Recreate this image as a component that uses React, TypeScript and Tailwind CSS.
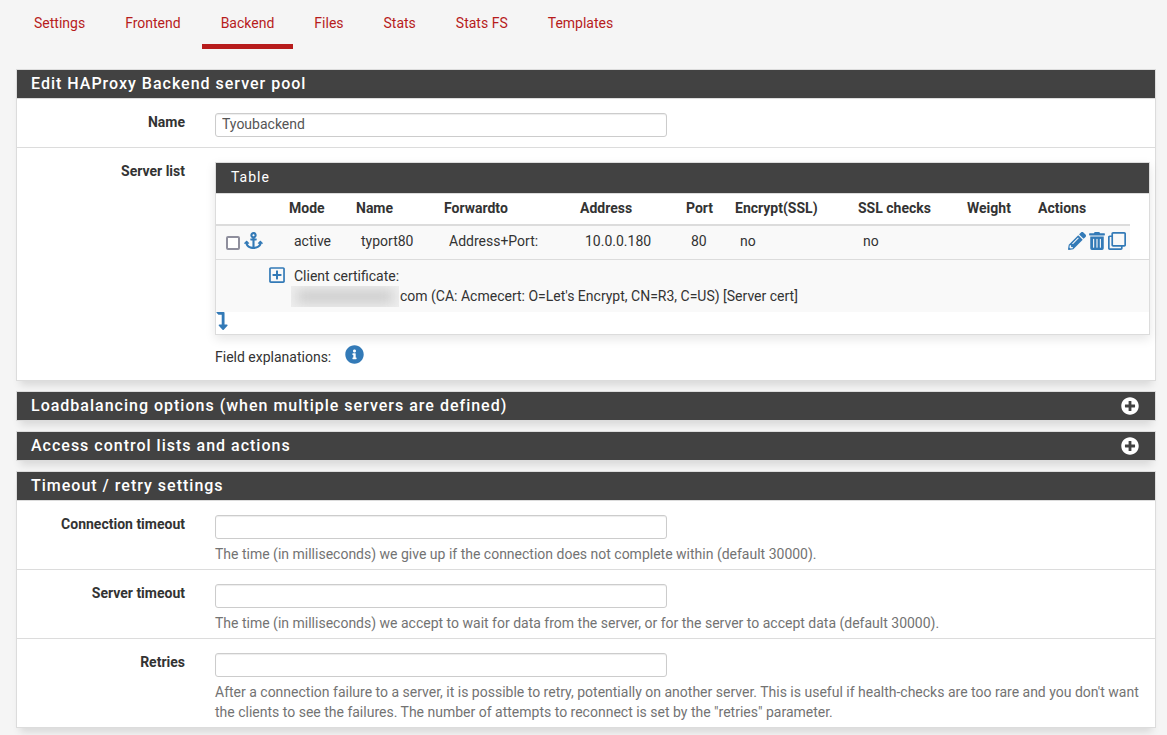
import React, { useState } from 'react';
import {
  FaAnchor,
  FaInfoCircle,
  FaLevelDownAlt,
  FaPencilAlt,
  FaPlusCircle,
  FaRegClone,
  FaRegPlusSquare,
  FaTrashAlt,
} from 'react-icons/fa';

const tabs = ['Settings', 'Frontend', 'Backend', 'Files', 'Stats', 'Stats FS', 'Templates'];

const columns = ['Mode', 'Name', 'Forwardto', 'Address', 'Port', 'Encrypt(SSL)', 'SSL checks', 'Weight', 'Actions'];

const servers = [
  ['active', 'typort80', 'Address+Port:', '10.0.0.180', '80', 'no', 'no', ''],
];

const timeouts = [
  {
    id: 'connection_timeout',
    label: 'Connection timeout',
    help: 'The time (in milliseconds) we give up if the connection does not complete within (default 30000).',
  },
  {
    id: 'server_timeout',
    label: 'Server timeout',
    help: 'The time (in milliseconds) we accept to wait for data from the server, or for the server to accept data (default 30000).',
  },
  {
    id: 'retries',
    label: 'Retries',
    help: 'After a connection failure to a server, it is possible to retry, potentially on another server. This is useful if health-checks are too rare and you don\'t want the clients to see the failures. The number of attempts to reconnect is set by the "retries" parameter.',
  },
];

const inputClass =
  'block w-full max-w-[452px] h-6 mb-[5px] px-1.5 pb-0.5 bg-white border border-[#cccccc] rounded-[3px] text-[#555555] shadow-[inset_0_1px_1px_rgba(0,0,0,0.075)]';

type PanelProps = {
  title: string;
  collapsed?: boolean;
  children?: React.ReactNode;
};

const Panel: React.FC<PanelProps> = ({ title, collapsed, children }) => (
  <section className="bg-white border border-[#dcdcdc] shadow-[0_8px_8px_-4px_rgba(0,0,0,0.12)]">
    <div className="flex items-center justify-between h-7 pl-[14px] pr-4 bg-[#424242] text-white">
      <h2 className="text-base leading-5 font-medium tracking-[1px]">{title}</h2>
      {collapsed && (
        <button type="button" aria-label={`Expand ${title}`} className="cursor-pointer">
          <FaPlusCircle className="size-[18px]" />
        </button>
      )}
    </div>
    {!collapsed && <div className="border-t border-[#dcdcdc] divide-y divide-[#dcdcdc]">{children}</div>}
  </section>
);

type RowProps = {
  label: string;
  htmlFor?: string;
  children: React.ReactNode;
};

const Row: React.FC<RowProps> = ({ label, htmlFor, children }) => (
  <div className="flex gap-[30px] pt-[14px] pb-[5px] pr-[5px]">
    <label htmlFor={htmlFor} className="w-[168px] shrink-0 -mt-px text-right font-bold">
      {label}
    </label>
    <div className="flex-1 min-w-0">{children}</div>
  </div>
);

const ServerTable: React.FC = () => (
  <div className="border border-[#dcdcdc] bg-white shadow-[0_4px_10px_rgba(0,0,0,0.1)]">
    <h3 className="h-[30px] px-[15px] py-1 bg-[#424242] text-white tracking-[1px]">Table</h3>
    <table className="w-full table-fixed border-separate border-spacing-0 border-t border-[#dcdcdc] text-left">
      <colgroup>
        <col className="w-[68px]" />
        <col className="w-[67px]" />
        <col className="w-[88px]" />
        <col className="w-[136px]" />
        <col className="w-[106px]" />
        <col className="w-[49px]" />
        <col className="w-[123px]" />
        <col className="w-[109px]" />
        <col className="w-[71px]" />
        <col className="w-[97px]" />
        <col />
      </colgroup>
      <thead>
        <tr>
          <td className="border-b-2 border-[#dcdcdc]" />
          {columns.map((name) => (
            <th key={name} className="px-[5px] pt-1 pb-1.5 border-b-2 border-[#dcdcdc] font-bold">
              {name}
            </th>
          ))}
          <td />
        </tr>
      </thead>
      <tbody>
        {servers.map((cells) => (
          <tr key={cells[1]} className="h-[33px]">
            <td className="pl-2.5 pb-1 bg-[#f9f9f9]">
              <div className="flex items-center gap-1">
                <input type="checkbox" aria-label="Select server" className="size-[14px] mt-1 appearance-none bg-white border-2 border-[#8f8f9d] rounded-[2px]" />
                <button type="button" aria-label="Move server" className="text-[#337ab7] cursor-pointer">
                  <FaAnchor className="size-[19px]" />
                </button>
              </div>
            </td>
            {cells.map((cell, i) => (
              <td key={i} className="px-2.5 pb-1 bg-[#f9f9f9] whitespace-nowrap">
                {cell}
              </td>
            ))}
            <td className="pr-1 pb-1 bg-[#f9f9f9]">
              <div className="flex items-center justify-end gap-0.5 text-[#337ab7]">
                <button type="button" aria-label="Edit server" className="cursor-pointer">
                  <FaPencilAlt className="size-[18px]" />
                </button>
                <button type="button" aria-label="Delete server" className="cursor-pointer">
                  <FaTrashAlt className="size-[18px]" />
                </button>
                <button type="button" aria-label="Duplicate server" className="cursor-pointer">
                  <FaRegClone className="size-[18px]" />
                </button>
              </div>
            </td>
            <td />
          </tr>
        ))}
        <tr>
          <td colSpan={11} className="py-[6px] pl-[52px] border-t border-[#dcdcdc] bg-[#f9f9f9]">
            <div className="flex gap-2">
              <button type="button" aria-label="Show details" className="self-start text-[#337ab7] cursor-pointer">
                <FaRegPlusSquare className="size-[18px]" />
              </button>
              <div>
                <div>Client certificate:</div>
                <div className="flex items-center h-5">
                  <span className="w-[108px] h-[21px] -ml-[3px] mr-px bg-[#eeeeee] overflow-hidden py-1 px-1.5">
                    <span className="block h-full bg-[#cccccc] blur-[6px]" />
                  </span>
                  com (CA: Acmecert: O=Let's Encrypt, CN=R3, C=US) [Server cert]
                </div>
              </div>
            </div>
          </td>
        </tr>
      </tbody>
    </table>
    <button type="button" aria-label="Add server" className="block h-[22px] pb-1 text-[#337ab7] cursor-pointer">
      <FaLevelDownAlt className="w-3 h-[18px]" />
    </button>
  </div>
);

const App: React.FC = () => {
  const [active, setActive] = useState('Backend');

  return (
    <div className="min-h-screen bg-[#f5f5f5] text-[#333333] text-sm leading-5 font-['Roboto',sans-serif]">
      <nav className="flex gap-0.5 pl-[15px]">
        {tabs.map((tab) => (
          <a
            key={tab}
            href="#"
            onClick={() => setActive(tab)}
            className={`h-[49px] px-[19px] pt-[13px] border-b-[5px] text-[#b71c1c] ${
              tab === active ? 'border-[#b71c1c]' : 'border-transparent'
            }`}
          >
            {tab}
          </a>
        ))}
      </nav>

      <main className="flex flex-col gap-2.5 mt-5 ml-4 mr-[11px] pb-2">
        <Panel title="Edit HAProxy Backend server pool">
          <Row label="Name" htmlFor="name">
            <input id="name" type="text" defaultValue="Tyoubackend" className={inputClass} />
          </Row>
          <Row label="Server list">
            <ServerTable />
            <div className="flex items-start gap-[14px] pt-2.5 pb-2">
              <span className="pt-0.5">Field explanations:</span>
              <button type="button" aria-label="Field explanations" className="text-[#337ab7] cursor-pointer">
                <FaInfoCircle className="size-[19px]" />
              </button>
            </div>
          </Row>
        </Panel>

        <Panel title="Loadbalancing options (when multiple servers are defined)" collapsed />
        <Panel title="Access control lists and actions" collapsed />

        <Panel title="Timeout / retry settings">
          {timeouts.map(({ id, label, help }) => (
            <Row key={id} label={label} htmlFor={id}>
              <input id={id} type="text" className={inputClass} />
              <p className="text-[#737373]">{help}</p>
            </Row>
          ))}
        </Panel>
      </main>
    </div>
  );
};

export default App;
